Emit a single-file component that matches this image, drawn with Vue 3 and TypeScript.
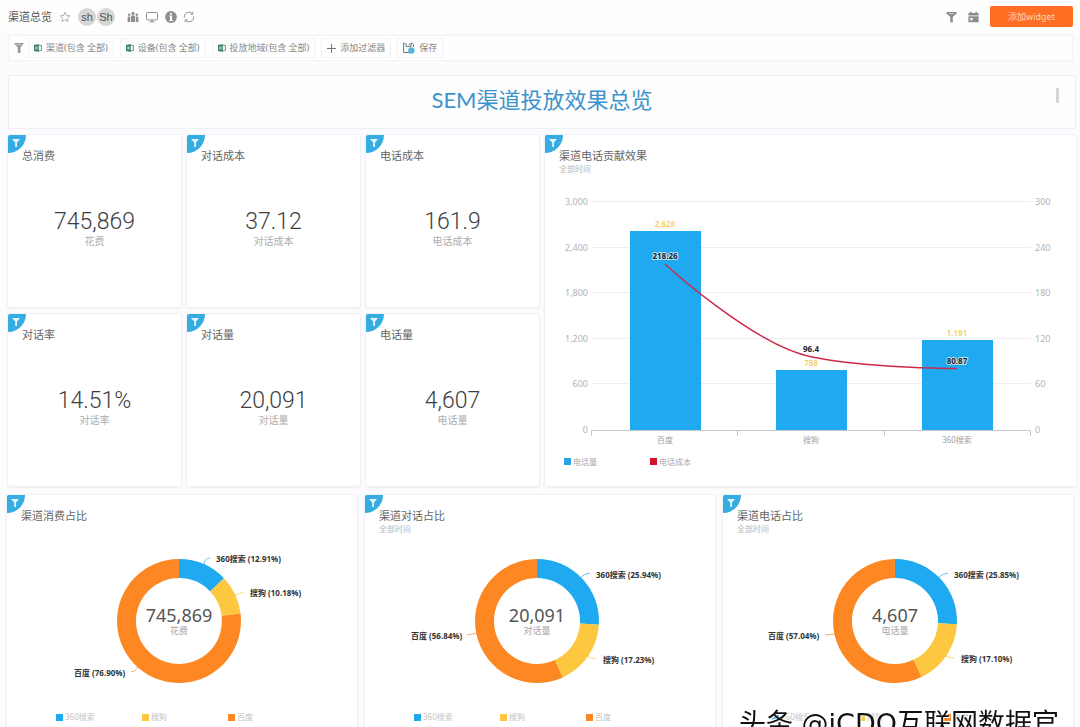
<script setup lang="ts">
interface Slice { name: string; pct: number; color: string; x: number; y: number; leader: string }
interface Donut { title: string; sub: string; value: string; label: string; slices: Slice[] }

const filters: string[] = ['渠道(包含 全部)', '设备(包含 全部)', '投放地域(包含 全部)']

const kpis = [
  { title: '总消费', value: '745,869', label: '花费' },
  { title: '对话成本', value: '37.12', label: '对话成本' },
  { title: '电话成本', value: '161.9', label: '电话成本' },
  { title: '对话率', value: '14.51%', label: '对话率' },
  { title: '对话量', value: '20,091', label: '对话量' },
  { title: '电话量', value: '4,607', label: '电话量' },
]

const ticks = [0, 1, 2, 3, 4, 5].map((i) => ({
  y: 250 - i * 46 + Math.round(i * 0.4),
  left: (i * 600).toLocaleString('en-US'),
  right: String(i * 60),
}))

const bars = [
  { name: '百度', value: '2,628', x: 85, top: 51 },
  { name: '搜狗', value: '788', x: 231, top: 190 },
  { name: '360搜索', value: '1,191', x: 377, top: 160 },
]
const linePoints = [
  { text: '218.26', x: 120, y: 79 },
  { text: '96.4', x: 266, y: 172 },
  { text: '80.87', x: 412, y: 184 },
]

const BLUE = '#1ea9f0'
const YELLOW = '#fdc840'
const ORANGE = '#fd8823'

const donuts: Donut[] = [
  {
    title: '渠道消费占比', sub: '', value: '745,869', label: '花费',
    slices: [
      { name: '360搜索', pct: 12.91, color: BLUE, x: 209, y: 22, leader: 'M197 25 Q197 18 203 18' },
      { name: '搜狗', pct: 10.18, color: YELLOW, x: 243, y: 56, leader: 'M228 55 L237 52' },
      { name: '百度', pct: 76.91, color: ORANGE, x: 67, y: 136, leader: 'M124 132 Q128 132 131 127' },
    ],
  },
  {
    title: '渠道对话占比', sub: '全部时间', value: '20,091', label: '对话量',
    slices: [
      { name: '360搜索', pct: 25.94, color: BLUE, x: 231, y: 38, leader: 'M216 37 Q219 34 225 33' },
      { name: '搜狗', pct: 17.23, color: YELLOW, x: 238, y: 123, leader: 'M223 116 Q226 119 231 119' },
      { name: '百度', pct: 56.83, color: ORANGE, x: 46, y: 99, leader: 'M102 95 L113 93' },
    ],
  },
  {
    title: '渠道电话占比', sub: '全部时间', value: '4,607', label: '电话量',
    slices: [
      { name: '360搜索', pct: 25.85, color: BLUE, x: 231, y: 38, leader: 'M216 37 Q219 34 225 33' },
      { name: '搜狗', pct: 17.1, color: YELLOW, x: 238, y: 122, leader: 'M223 116 Q226 118 231 118' },
      { name: '百度', pct: 57.05, color: ORANGE, x: 45, y: 99, leader: 'M102 95 L113 94' },
    ],
  },
]
const shownPct: string[][] = [
  ['12.91', '10.18', '76.90'],
  ['25.94', '17.23', '56.84'],
  ['25.85', '17.10', '57.04'],
]

const CX = 172
const CY = 81
const point = (pct: number, r: number): string => {
  const a = (pct / 100) * Math.PI * 2
  return `${(CX + r * Math.sin(a)).toFixed(2)} ${(CY - r * Math.cos(a)).toFixed(2)}`
}
const arc = (d: Donut, i: number): string => {
  const start = d.slices.slice(0, i).reduce((s, c) => s + c.pct, 0)
  const end = Math.min(start + d.slices[i].pct, 99.99)
  const big = end - start > 50 ? 1 : 0
  return `M${point(start, 62)} A62 62 0 ${big} 1 ${point(end, 62)} L${point(end, 43)} A43 43 0 ${big} 0 ${point(start, 43)} Z`
}
</script>

<template>
  <div class="page">
    <header class="topbar">
      <h1 class="name">渠道总览</h1>
      <button class="icon-btn star" aria-label="收藏">
        <svg width="12" height="12" viewBox="0 0 12 12"><path d="M6 1.2 7.4 4.5 11 4.8 8.3 7.1 9.1 10.6 6 8.7 2.9 10.6 3.7 7.1 1 4.8 4.6 4.5Z" fill="none" stroke="#b5b5b5" /></svg>
      </button>
      <div class="avatars"><span class="avatar">sh</span><span class="avatar">Sh</span></div>
      <div class="tools">
        <button class="icon-btn" aria-label="成员">
          <svg width="12" height="12" viewBox="0 0 12 12" fill="#8f8f8f"><circle cx="6" cy="2.4" r="1.6" /><circle cx="2.2" cy="3.8" r="1.2" /><circle cx="9.8" cy="3.8" r="1.2" /><path d="M.6 11V6.8q0-1.2 1.2-1.2h1.4V11ZM4 11V5.6q0-1 1-1h2q1 0 1 1V11ZM8.8 11V5.6h1.4q1.2 0 1.2 1.2V11Z" /></svg>
        </button>
        <button class="icon-btn" aria-label="演示">
          <svg width="14" height="12" viewBox="0 0 14 12" fill="none" stroke="#8f8f8f"><rect x="1.5" y="1.5" width="11" height="7.4" rx="1" /><path d="M4.5 10.9h5M7 9v2" /></svg>
        </button>
        <button class="icon-btn" aria-label="信息">
          <svg width="12" height="12" viewBox="0 0 12 12"><circle cx="6" cy="6" r="5.9" fill="#8f8f8f" /><path d="M5 2h2v1.6H5ZM4.400 4.600H7V9h.8v1H4.300V9H5V5.600h-.6Z" fill="#fff" /></svg>
        </button>
        <button class="icon-btn" aria-label="刷新">
          <svg width="12" height="12" viewBox="0 0 12 12" fill="none" stroke="#969696"><path d="M1.2 6.6A4.8 4.8 0 0 1 9.6 2.8M10.8 5.4A4.8 4.8 0 0 1 2.4 9.2M9.8.8v2.4H7.4M2.2 11.2V8.8h2.4" /></svg>
        </button>
      </div>
      <div class="right">
        <button class="icon-btn" aria-label="筛选">
          <svg width="11" height="12" viewBox="0 0 11 12"><path d="M.4 1h10.2v1.4L6.8 6v5.4H4.3V6L.4 2.4Z" fill="#8c8c8c" /><path d="M3 2.6h4.6" stroke="#d0d0d0" /></svg>
        </button>
        <button class="icon-btn" aria-label="日期">
          <svg width="11" height="12" viewBox="0 0 11 12" fill="#8c8c8c"><path d="M2 .8h1.600v1.200h3.800V.8H9v1.200h1.600V4.400H.4V2H2Z" /><path d="M.4 5.200h10.200v6H.4ZM2.200 7v2.200h2.400V7Z" fill-rule="evenodd" /></svg>
        </button>
        <button class="add">添加widget</button>
      </div>
    </header>

    <nav class="filters" aria-label="过滤器">
      <svg class="funnel" width="10" height="12" viewBox="0 0 10 12"><path d="M0 1h10L6.4 5.4V11H3.8V5.4Z" fill="#979797" /><path d="M2.4 2.6h4.8" stroke="#d0d0d0" /></svg>
      <button v-for="f in filters" :key="f" class="chip">
        <svg width="8" height="8" viewBox="0 0 8 8"><path d="M0 1 4.8 0v8L0 7Z" fill="#3c8168" /><path d="M5 1.4h2.4v5.2H5" fill="none" stroke="#5f9a84" /><path d="m1.3 2.6 2.2 2.8M3.5 2.6 1.3 5.4" stroke="#fff" stroke-width=".8" /></svg>
        <span>{{ f }}</span>
      </button>
      <button class="chip">
        <svg width="9" height="9" viewBox="0 0 9 9"><path d="M4.5 0v9M0 4.5h9" stroke="#777" /></svg>
        <span>添加过滤器</span>
      </button>
      <button class="chip">
        <svg width="12" height="12" viewBox="0 0 12 12"><path d="M6 10.500H.6V1H2M3 1v3.400h5V1h1l1.400 1.400V5M6.400 1.600v1.600" fill="none" stroke="#6b7378" /><circle cx="8.400" cy="8.400" r="3.200" fill="#54b4dd" /></svg>
        <span>保存</span>
      </button>
    </nav>

    <section class="banner">
      <h2>SEM渠道投放效果总览</h2>
      <button class="more" aria-label="更多"></button>
    </section>

    <main>
      <div class="grid-top">
        <article v-for="k in kpis" :key="k.title" class="card">
          <button class="corner" aria-label="筛选"><svg width="8" height="8" viewBox="0 0 8 8"><path d="M0 0h8L5 3.6V8H3.2V3.6Z" fill="#e6f6fd" /></svg></button>
          <div class="head"><h3>{{ k.title }}</h3></div>
          <div class="kpi"><strong>{{ k.value }}</strong><span>{{ k.label }}</span></div>
        </article>

        <article class="card wide">
          <button class="corner" aria-label="筛选"><svg width="8" height="8" viewBox="0 0 8 8"><path d="M0 0h8L5 3.6V8H3.2V3.6Z" fill="#e6f6fd" /></svg></button>
          <div class="head tall"><h3>渠道电话贡献效果</h3><p>全部时间</p></div>
          <svg class="chart" viewBox="0 0 531 302" role="img" aria-label="渠道电话贡献效果">
            <g v-for="t in ticks" :key="t.right">
              <path v-if="t.right !== '0'" :d="`M47 ${t.y - 0.5}H486`" stroke="#f0ecf1" />
              <text class="axis" x="43" :y="t.y + 3" text-anchor="end">{{ t.left }}</text>
              <text class="axis" x="490" :y="t.y + 3">{{ t.right }}</text>
            </g>
            <g v-for="b in bars" :key="b.name">
              <rect :x="b.x" :y="b.top" width="71" :height="250 - b.top" :fill="BLUE" />
              <text class="bar-value" :x="b.x + 35" :y="b.top - 4" text-anchor="middle">{{ b.value }}</text>
              <text class="cat" :x="b.x + 35" y="263" text-anchor="middle">{{ b.name }}</text>
            </g>
            <path d="M46.500 256V250.500H485.500V256M192.500 250V256M339.500 250V256" fill="none" stroke="#c6c8cc" />
            <path d="M120 84C120 84 208 165 266 176.700C324 188.500 412 188.500 412 188.500" fill="none" stroke="#cb2b48" stroke-width="1.500" />
            <text v-for="p in linePoints" :key="p.text" class="point" :x="p.x" :y="p.y" text-anchor="middle">{{ p.text }}</text>
            <rect x="19" y="278" width="7" height="7" fill="#28a5e0" />
            <text class="legend" x="28" y="285">电话量</text>
            <rect x="105" y="278" width="7" height="7" fill="#d3122e" />
            <text class="legend" x="114" y="285">电话成本</text>
          </svg>
        </article>
      </div>

      <div class="grid-bottom">
        <article v-for="(d, n) in donuts" :key="d.title" class="card">
          <button class="corner" aria-label="筛选"><svg width="8" height="8" viewBox="0 0 8 8"><path d="M0 0h8L5 3.6V8H3.2V3.6Z" fill="#e6f6fd" /></svg></button>
          <div class="head tall"><h3>{{ d.title }}</h3><p v-if="d.sub">{{ d.sub }}</p></div>
          <svg class="chart" viewBox="0 0 350 200" role="img" :aria-label="d.title">
            <g v-for="(s, i) in d.slices" :key="s.name">
              <path :d="arc(d, i)" :fill="s.color" />
              <path :d="s.leader" fill="none" :stroke="s.color" stroke-opacity=".7" />
              <text class="slice" :x="s.x" :y="s.y">{{ s.name }} ({{ shownPct[n][i] }}%)</text>
              <rect :x="49 + i * 86" y="174" width="7" height="7" :fill="s.color" />
              <text class="legend pale" :x="58 + i * 86" y="180">{{ s.name }}</text>
            </g>
            <text class="total" x="172" y="82" text-anchor="middle">{{ d.value }}</text>
            <text class="total-label" x="172" y="94" text-anchor="middle">{{ d.label }}</text>
          </svg>
        </article>
      </div>
    </main>
    <div class="mark">头条 @iCDO互联网数据官</div>
  </div>
</template>

<style>
html { scrollbar-width: none; }
body { margin: 0; background: #fcfbfd; }
</style>

<style scoped>
.page {
  font-family: "Noto Sans", "Noto Sans CJK SC", sans-serif;
  color: #555;
  overflow: hidden;
}
h1, h2, h3, p { margin: 0; font-weight: 400; }
button { font-family: inherit; border: 0; padding: 0; margin: 0; background: none; cursor: pointer; }
svg { display: block; flex: none; }

.topbar { display: flex; align-items: center; height: 33px; padding: 0 7px 0 8px; background: #fefefe; }
.name { font-size: 11px; line-height: 16px; color: #555; }
.icon-btn { display: flex; align-items: center; justify-content: center; }
.star { margin-left: 7px; }
.avatars { display: flex; margin-left: 7px; gap: 1px; }
.avatar {
  width: 18px; height: 18px; border-radius: 50%; background: #d6d6d6;
  font: 11px/18px "Liberation Sans", sans-serif; text-align: center; color: #555;
}
.tools { display: flex; gap: 6px; margin-left: 12px; }
.right { display: flex; align-items: center; gap: 11px; margin-left: auto; }
.add {
  width: 83px; height: 21px; border-radius: 2px; background: #ff6e22; color: #ffd3b4;
  font-size: 9px; line-height: 20px;
}

.filters {
  display: flex; align-items: center; gap: 6px; height: 24px; margin: 2px 7px 0 8px;
  padding-left: 5px; border: 1px solid #f0f4f6; background: #fefefe;
}
.funnel { margin-right: -2px; }
.chip {
  display: flex; align-items: center; gap: 4px; height: 20px; padding: 0 5px;
  border: 1px solid #f1f3f4; font-size: 9px; line-height: 16px; color: #888; background: #fefefe; white-space: nowrap;
}

.banner {
  position: relative; display: flex; align-items: center; justify-content: center;
  height: 52px; margin: 14px 4px 6px 8px; border: 1px solid #f0eff3; background: #fefefe;
}
.banner h2 { padding-bottom: 4px; font-family: Lato, "Noto Sans CJK SC", sans-serif; font-size: 22px; line-height: 30px; color: #3d93cd; }
.more { position: absolute; right: 16px; top: 12px; width: 3px; height: 15px; background: #d5d5da; }

.grid-top { display: grid; grid-template-columns: 173fr 173fr 173fr 531fr; gap: 7px 6px; padding: 0 4px 0 8px; }
.grid-bottom { display: grid; grid-template-columns: repeat(3, 1fr); gap: 8px; padding: 9px 7px 8px; }
.card {
  position: relative; display: flex; flex-direction: column; min-width: 0; background: #fff;
  border-radius: 2px; box-shadow: 0 0 0 1px #f1f0f5, 0 1px 2px 1px #f1f0f4;
}
.grid-top .card { min-height: 172px; }
.wide { grid-column: 4; grid-row: 1 / span 2; }
.corner {
  position: absolute; left: 0; top: 0; width: 18px; height: 18px; border-radius: 2px 0 18px 0;
  background: #35ade3; display: flex; padding: 4px 0 0 4px;
}
.head { padding: 14px 14px 0; box-sizing: border-box; }
.head.tall { height: 45px; }
.head h3 { font-size: 11px; line-height: 14px; color: #666; }
.head p { font-size: 8px; line-height: 11px; color: #b8b8b8; }
.kpi { flex: 1; display: flex; flex-direction: column; align-items: center; justify-content: center; padding-bottom: 12px; }
.kpi strong { font: 300 23px/24px Roboto, sans-serif; color: #3e3e42; }
.kpi span { font-size: 10px; line-height: 14px; color: #adadad; }

.chart { width: 100%; height: auto; }
.axis { font-size: 9px; fill: #b2b2b6; }
.bar-value { font-size: 8px; font-weight: 600; fill: #f0cf58; }
.cat { font-size: 8px; fill: #a2a2a2; }
.point { font-size: 8px; font-weight: 700; fill: #222; stroke: #fff; stroke-width: 2px; stroke-opacity: .7; paint-order: stroke; }
.legend { font-size: 8px; fill: #a9a9a9; }
.pale { fill: #c4c4c4; }
.slice { font-size: 8px; font-weight: 700; fill: #333; }
.total { font-size: 18px; fill: #555; }
.total-label { font-size: 9px; fill: #a5a5a5; }

.mark {
  position: fixed; right: 21px; bottom: -15px; color: #111; white-space: nowrap;
  font: 27px/36px "DejaVu Sans", "Noto Sans CJK SC", sans-serif;
  text-shadow: -1px -1px 0 #fff, 1px 1px 0 #fff;
}
</style>
